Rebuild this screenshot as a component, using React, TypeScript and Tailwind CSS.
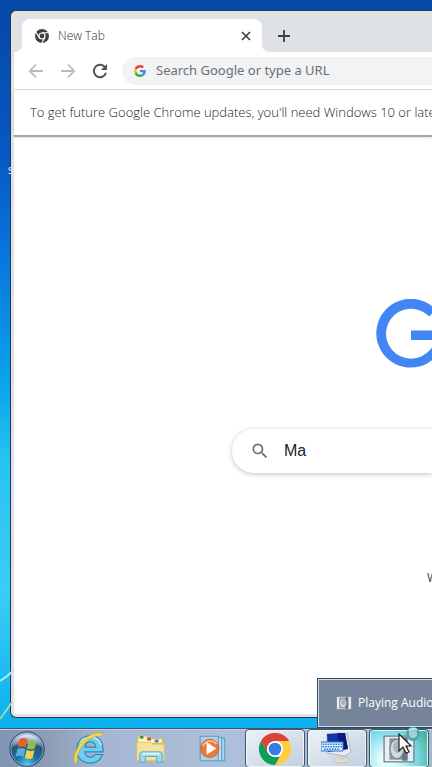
import type { ReactNode } from "react";

function ChromeGlyph() {
  return (
    <svg viewBox="0 0 16 16" className="h-4 w-4 shrink-0" aria-hidden="true">
      <circle cx="8" cy="8" r="7" fill="#3c4043" />
      <circle cx="8" cy="8" r="3.6" fill="#fff" />
      <circle cx="8" cy="8" r="2.4" fill="#3c4043" />
      <path d="M8 4.7h6.4M5.2 9.7 2 4.2M10.8 9.7 7.6 15.2" stroke="#fff" strokeWidth="1.1" />
    </svg>
  );
}

function GoogleG() {
  return (
    <svg viewBox="0 0 48 48" className="h-3 w-3 shrink-0" aria-hidden="true">
      <path fill="#ea4335" d="M24 9.5c3.54 0 6.71 1.22 9.21 3.6l6.85-6.85C35.9 2.38 30.47 0 24 0 14.62 0 6.51 5.38 2.56 13.22l7.98 6.19C12.43 13.72 17.74 9.5 24 9.5z" />
      <path fill="#4285f4" d="M46.98 24.55c0-1.57-.15-3.09-.38-4.55H24v9.02h12.94c-.58 2.96-2.26 5.48-4.78 7.18l7.73 6c4.51-4.18 7.09-10.36 7.09-17.65z" />
      <path fill="#fbbc05" d="M10.53 28.59A14.5 14.5 0 0 1 9.77 24c0-1.6.27-3.14.76-4.59l-7.98-6.19A23.9 23.9 0 0 0 0 24c0 3.88.92 7.54 2.56 10.78l7.97-6.19z" />
      <path fill="#34a853" d="M24 48c6.48 0 11.93-2.13 15.89-5.81l-7.73-6c-2.15 1.45-4.92 2.3-8.16 2.3-6.26 0-11.57-4.22-13.47-9.91l-7.98 6.19C6.51 42.62 14.62 48 24 48z" />
    </svg>
  );
}

function Arrow({ back = false }: { back?: boolean }) {
  return (
    <svg viewBox="0 0 16 16" className="h-4 w-4" fill="none" stroke="#b9bbbe" strokeWidth="1.8" aria-hidden="true">
      {back ? <path d="M15 8H2M8 1.5 1.8 8 8 14.5" /> : <path d="M1 8h13M8 1.5 14.2 8 8 14.5" />}
    </svg>
  );
}

function StartOrb() {
  return (
    <svg viewBox="0 0 36 36" className="h-9 w-9" aria-hidden="true">
      <defs>
        <radialGradient id="orb" cx="50%" cy="95%" r="85%">
          <stop offset="0" stopColor="#4cc9ec" />
          <stop offset="0.4" stopColor="#1c6d9e" />
          <stop offset="0.75" stopColor="#2b5377" />
          <stop offset="1" stopColor="#8ba9c4" />
        </radialGradient>
        <linearGradient id="gloss" x1="0" y1="0" x2="0" y2="1">
          <stop offset="0" stopColor="#fff" stopOpacity="0.75" />
          <stop offset="1" stopColor="#fff" stopOpacity="0.1" />
        </linearGradient>
      </defs>
      <circle cx="18" cy="18" r="17.2" fill="url(#orb)" stroke="#294866" strokeWidth="1" />
      <circle cx="18" cy="18" r="16.2" fill="none" stroke="#a9cfe2" strokeOpacity="0.6" />
      <path d="M3 16a15.2 15.2 0 0 1 30 0c-8-4-22-4-30 0z" fill="url(#gloss)" />
      <path d="M10.5 8c3-1.4 5.6-1.200 8 .3l-1.800 8.500c-2.500-1.500-5-1.700-8-.3z" fill="#e8602c" />
      <path d="M19.700 9.100c2.500 1.400 5 1.400 7.800.2l-1.800 8.300c-2.800 1.200-5.300 1.100-7.800-.2z" fill="#8dbf4c" />
      <path d="M8.400 17.900c3-1.400 5.600-1.200 8 .3l-1.800 7.900c-2.500-1.500-5-1.700-8-.3z" fill="#5aaee4" />
      <path d="M17.600 18.800c2.500 1.400 5 1.400 7.800.2l-1.800 8.100c-2.800 1.200-5.300 1.100-7.800-.2z" fill="#f5cf45" />
    </svg>
  );
}

function ExplorerE() {
  return (
    <svg viewBox="0 0 32 32" className="h-9 w-9" aria-hidden="true">
      <path d="M28.600 18.500H12.300c.2 3 2 4.700 4.800 4.700 2 0 3.400-.8 4.300-2.300h6.700C26.500 25.900 22.500 28.500 17 28.500 9.700 28.500 5.200 23.900 5.200 16.700 5.200 9.100 10 4.200 17 4.200c7.500 0 11.900 5 11.600 14.300zM12.400 14.300h9.500c-.2-2.900-1.900-4.600-4.600-4.600-2.700 0-4.500 1.700-4.900 4.600z" fill="#6fcdf0" stroke="#2f86b5" strokeWidth="1" />
      <path d="M8 10.500c2-3.600 5-5 9-5 5 0 8.500 2.600 9.800 7" fill="none" stroke="#c3effb" strokeWidth="1.300" />
      <path d="M27.500 3.500C23 1.500 14 5.500 8.500 13 4.500 19.500 3 24 4.300 28" fill="none" stroke="#b99b34" strokeWidth="3.200" />
      <path d="M27.500 3.500C23 1.500 14 5.500 8.500 13 4.500 19.500 3 24 4.300 28" fill="none" stroke="#f3d84a" strokeWidth="2.400" />
    </svg>
  );
}

function FolderIcon() {
  return (
    <svg viewBox="0 0 34 32" className="h-8 w-8" aria-hidden="true">
      <path d="M2 5h29v24H2z" fill="#d8bd62" />
      <path d="M3 2h9l2 3h15v5H3z" fill="#faf3ca" stroke="#d5b45a" />
      <path d="M5 2h4v3H5z" fill="#2f9e3b" />
      <path d="M13 4h4v3h-4z" fill="#d9482c" />
      <path d="M21 6h4v3h-4z" fill="#3f7fb4" />
      <path d="M2 9h15l2 2h12v17H2z" fill="#f3e39c" stroke="#dfc46a" />
      <path d="M5 30v-8c0-2 1-3 3-3h18c2 0 3 1 3 3v8h-6v-6H11v6z" fill="#9bd7f0" stroke="#5ba5cc" />
      <path d="M8 21h18" stroke="#e4f7fd" strokeWidth="2" />
    </svg>
  );
}

function MediaIcon() {
  return (
    <svg viewBox="0 0 30 30" className="h-8 w-8" aria-hidden="true">
      <path d="M20 5h6v21h-6z" fill="#a9d2ea" stroke="#5b9fc8" />
      <path d="M18 4h5v22h-5z" fill="#c0e0f2" stroke="#5b9fc8" />
      <path d="M3 3h17v23H3z" fill="#b0cfe6" stroke="#5b9bc5" />
      <circle cx="12" cy="14.500" r="8.500" fill="#e97a3c" stroke="#ce6c34" />
      <path d="M5.500 12.500a7.500 7.500 0 0 1 13-2" fill="none" stroke="#ffc28a" strokeWidth="1.500" />
      <path d="m9 8.500 9 6-9 6z" fill="#fff" />
    </svg>
  );
}

function ChromeIcon() {
  return (
    <svg viewBox="0 0 48 48" className="h-8 w-8" aria-hidden="true">
      <path d="M24 24 3.200 12A24 24 0 0 1 44.800 12z" fill="#db4437" />
      <path d="M24 24V12h20.800A24 24 0 0 1 24 48l10.400-18z" fill="#ffcd40" />
      <path d="M3.200 12 13.600 30 24 36h6.900L24 48A24 24 0 0 1 3.200 12z" fill="#0f9d58" />
      <path d="M24 12h20.800A24 24 0 0 0 3.200 12l10.400 18A12 12 0 0 1 24 12z" fill="#db4437" />
      <circle cx="24" cy="24" r="12" fill="#fff" />
      <circle cx="24" cy="24" r="9.500" fill="#347be6" />
    </svg>
  );
}

function KeyboardIcon() {
  return (
    <svg viewBox="0 0 32 32" className="h-8 w-8" aria-hidden="true">
      <ellipse cx="20" cy="27" rx="8" ry="3" fill="#e1dfd2" stroke="#c5c5bc" />
      <path d="m17 20 6-1 2 7-6 1z" fill="#d0d1cb" />
      <path d="m6 1 20-1 4 19-6 4-18-3z" fill="#e8ecf2" stroke="#b0b8c4" />
      <path d="m6 1 18-1 3 16-20 3z" fill="#1532a5" />
      <path d="m16 0 8 0 3 16-7 1z" fill="#0a1c82" />
      <path d="M0 9h22v9H0z" fill="#dff1ff" stroke="#2870c5" />
      <path d="M1.500 11.300H21M1.500 13.800H21M3 16.200h16" stroke="#2b80dc" strokeWidth="1.400" strokeDasharray="1.600 1" />
    </svg>
  );
}

function AudioIcon({ className }: { className: string }) {
  return (
    <svg viewBox="0 0 30 26" className={className} aria-hidden="true">
      <path d="M1 1h28v24H1z" fill="#e8eff2" stroke="#707d88" strokeWidth="1.200" />
      <path d="M6 3h17v20H6z" fill="#8795a3" />
      <path d="M18 2h5v22h-5z" fill="#697687" />
      <ellipse cx="13" cy="13" rx="6.500" ry="9" fill="#d3dade" stroke="#7d8993" strokeWidth="1.200" />
      <ellipse cx="13.500" cy="11" rx="4" ry="5.500" fill="#a9b6be" />
    </svg>
  );
}

function TaskButton({ label, active = false, glow = false, children }: {
  label: string;
  active?: boolean;
  glow?: boolean;
  children: ReactNode;
}) {
  let look = "border-transparent";
  if (active) look = "border-[#465469] bg-linear-to-br from-[#edf2f8] to-[#c1cede] shadow-[inset_0_0_0_1px_#eef5fb]";
  if (glow) look = "border-[#34545e] bg-[radial-gradient(circle_at_30%_80%,#ecffff_10%,#83dcef_55%,#38a783_100%)] shadow-[inset_0_0_0_1px_#d8fff4]";
  return (
    <button type="button" aria-label={label} className={`flex h-full w-[60px] shrink-0 items-center justify-center rounded-sm border ${look}`}>
      {children}
    </button>
  );
}

function BrowserWindow() {
  return (
    <div className="mt-[10px] mb-[10px] ml-[10px] flex flex-1 flex-col rounded-l-md border border-r-0 border-[#24384f] bg-[#dee1e6] pb-[3px] pl-[3px]">
      <div className="flex h-[41px] items-end pl-2">
        <div className="relative flex h-[33px] w-[240px] shrink-0 items-center rounded-t-lg bg-white pr-[10px] pl-3">
          <span className="absolute bottom-0 -left-2 h-2 w-2 bg-[radial-gradient(circle_at_0_0,transparent_8px,white_8px)]" />
          <span className="absolute -right-2 bottom-0 h-2 w-2 bg-[radial-gradient(circle_at_100%_0,transparent_8px,white_8px)]" />
          <ChromeGlyph />
          <span className="ml-2 flex-1 text-xs font-light text-[#2c3034]">New Tab</span>
          <button type="button" aria-label="Close tab">
            <svg viewBox="0 0 12 12" className="h-3 w-3" stroke="#3c4043" strokeWidth="1.700" aria-hidden="true">
              <path d="m2 2 8 8M10 2l-8 8" />
            </svg>
          </button>
        </div>
        <button type="button" aria-label="New tab" className="mb-[10px] ml-4">
          <svg viewBox="0 0 12 12" className="h-3 w-3" stroke="#3c4043" strokeWidth="1.800" aria-hidden="true">
            <path d="M6 0v12M0 6h12" />
          </svg>
        </button>
      </div>

      <div className="flex h-[38px] items-center border-b border-[#d9dbdf] bg-white pl-[14px]">
        <div className="flex gap-4 pr-[14px]">
          <button type="button" aria-label="Back"><Arrow back /></button>
          <button type="button" aria-label="Forward"><Arrow /></button>
          <button type="button" aria-label="Reload">
            <svg viewBox="0 0 16 16" className="h-4 w-4" fill="none" stroke="#505458" strokeWidth="2" aria-hidden="true">
              <path d="M13.300 4.600A6.200 6.200 0 1 0 14 9.800" />
              <path d="M15 1v6H9z" fill="#505458" stroke="none" />
            </svg>
          </button>
        </div>
        <div className="flex h-7 flex-1 items-center rounded-l-full bg-[#f1f3f4] pl-3">
          <GoogleG />
          <input
            aria-label="Address bar"
            placeholder="Search Google or type a URL"
            className="ml-[10px] w-full min-w-0 bg-transparent font-['Noto_Sans',sans-serif] text-[13px] outline-none placeholder:text-[#6b6f73]"
          />
        </div>
      </div>

      <div className="z-10 flex h-[47px] items-center overflow-hidden border-b-2 border-[#a6a6a6] bg-white pl-4 text-[13px] font-light whitespace-nowrap text-[#1f2326] shadow-sm">
        To get future Google Chrome updates, you'll need Windows 10 or later.
      </div>

      <main className="flex-1 overflow-hidden bg-white pt-[162px] pb-32">
        <svg viewBox="0 0 70 70" className="ml-[362px] h-[70px] w-[70px]" role="img" aria-label="Google">
          <path d="M59.900 10.800A34.400 34.400 0 1 0 69 31.500H35v9.400h24.300A25 25 0 1 1 53.200 17.500z" fill="#4285f4" />
        </svg>
        <div className="mt-[60px] ml-[218px] flex h-11 items-center rounded-l-full bg-white pl-[18px] shadow-[0_1px_5px_rgba(32,33,36,0.28)]">
          <svg viewBox="0 0 24 24" className="h-5 w-5 shrink-0" fill="#6b6f73" aria-hidden="true">
            <path d="M15.500 14h-.79l-.28-.27A6.470 6.470 0 0 0 16 9.500 6.500 6.500 0 1 0 9.500 16c1.610 0 3.090-.59 4.230-1.570l.27.28v.79l5 4.990L20.490 19l-4.990-5zm-6 0C7.010 14 5 11.990 5 9.500S7.010 5 9.500 5 14 7.010 14 9.500 11.990 14 9.500 14z" />
          </svg>
          <input
            aria-label="Search"
            defaultValue="Ma"
            className="ml-[14px] w-full min-w-0 bg-transparent font-['Liberation_Sans',sans-serif] text-base text-[#202124] outline-none"
          />
        </div>
        <p className="mt-[97px] ml-[413px] text-xs text-[#3c4043]">W</p>
      </main>
    </div>
  );
}

export default function App() {
  return (
    <div className="relative flex min-h-screen flex-col overflow-hidden bg-[linear-gradient(to_bottom,#0648a5_0%,#0758c4_20%,#0878dd_34%,#0ba3ec_50%,#28c3f1_60%,#3acdf5_77%,#08aeee_96%)] font-['Open_Sans','Noto_Sans',sans-serif]">
      <svg viewBox="0 0 14 60" className="absolute bottom-10 left-0 h-[60px] w-[14px]" fill="none" aria-hidden="true">
        <path d="M0 13Q7 9 14 2" stroke="#a9eafd" strokeWidth="2" />
        <path d="M0 51Q7 42 12 34" stroke="#a8e79a" strokeWidth="1.500" />
      </svg>
      <span className="absolute top-[162px] left-2 w-[3px] overflow-hidden text-xs text-white">s</span>

      <BrowserWindow />

      <div className="absolute right-0 bottom-10 z-20 flex h-[50px] w-[115px] items-center overflow-hidden border border-r-0 border-[#35485a] bg-[#758498] pl-[18px] text-xs whitespace-nowrap text-white shadow-[inset_1px_1px_0_#d5dee8,inset_0_-1px_0_#d5dee8]">
        <AudioIcon className="mr-[6px] h-4 w-4 shrink-0" />
        Playing Audio
      </div>

      <footer className="relative flex h-10 items-center gap-[2px] overflow-hidden border-t border-[#405774] bg-[linear-gradient(to_right,#8195b3,#8f9db5_50px,#a4b6d1_100px,#adbfd9_230px,#a5b7cf)] shadow-[inset_0_1px_0_#c3d0e1]">
        <button type="button" aria-label="Start" className="ml-[9px] w-12 shrink-0">
          <StartOrb />
        </button>
        <TaskButton label="Internet Explorer"><ExplorerE /></TaskButton>
        <TaskButton label="Windows Explorer"><FolderIcon /></TaskButton>
        <TaskButton label="Windows Media Player"><MediaIcon /></TaskButton>
        <TaskButton label="Google Chrome" active><ChromeIcon /></TaskButton>
        <TaskButton label="On-Screen Keyboard" active><KeyboardIcon /></TaskButton>
        <TaskButton label="Playing Audio" glow><AudioIcon className="h-7 w-8" /></TaskButton>
      </footer>

      <svg viewBox="0 0 28 30" className="pointer-events-none absolute right-2 bottom-[12px] z-30 h-[30px] w-7" aria-hidden="true">
        <circle cx="17" cy="8" r="5.500" fill="#9ed3d6" stroke="#55a5ab" strokeWidth="3" />
        <path d="M13 5a5.500 5.500 0 0 1 8-1" fill="none" stroke="#b8edf0" strokeWidth="2" />
        <path d="M3 8v17l4-4 3 6 3-1-3-6h5z" fill="#fff" stroke="#222" strokeWidth="1.200" />
      </svg>
    </div>
  );
}
